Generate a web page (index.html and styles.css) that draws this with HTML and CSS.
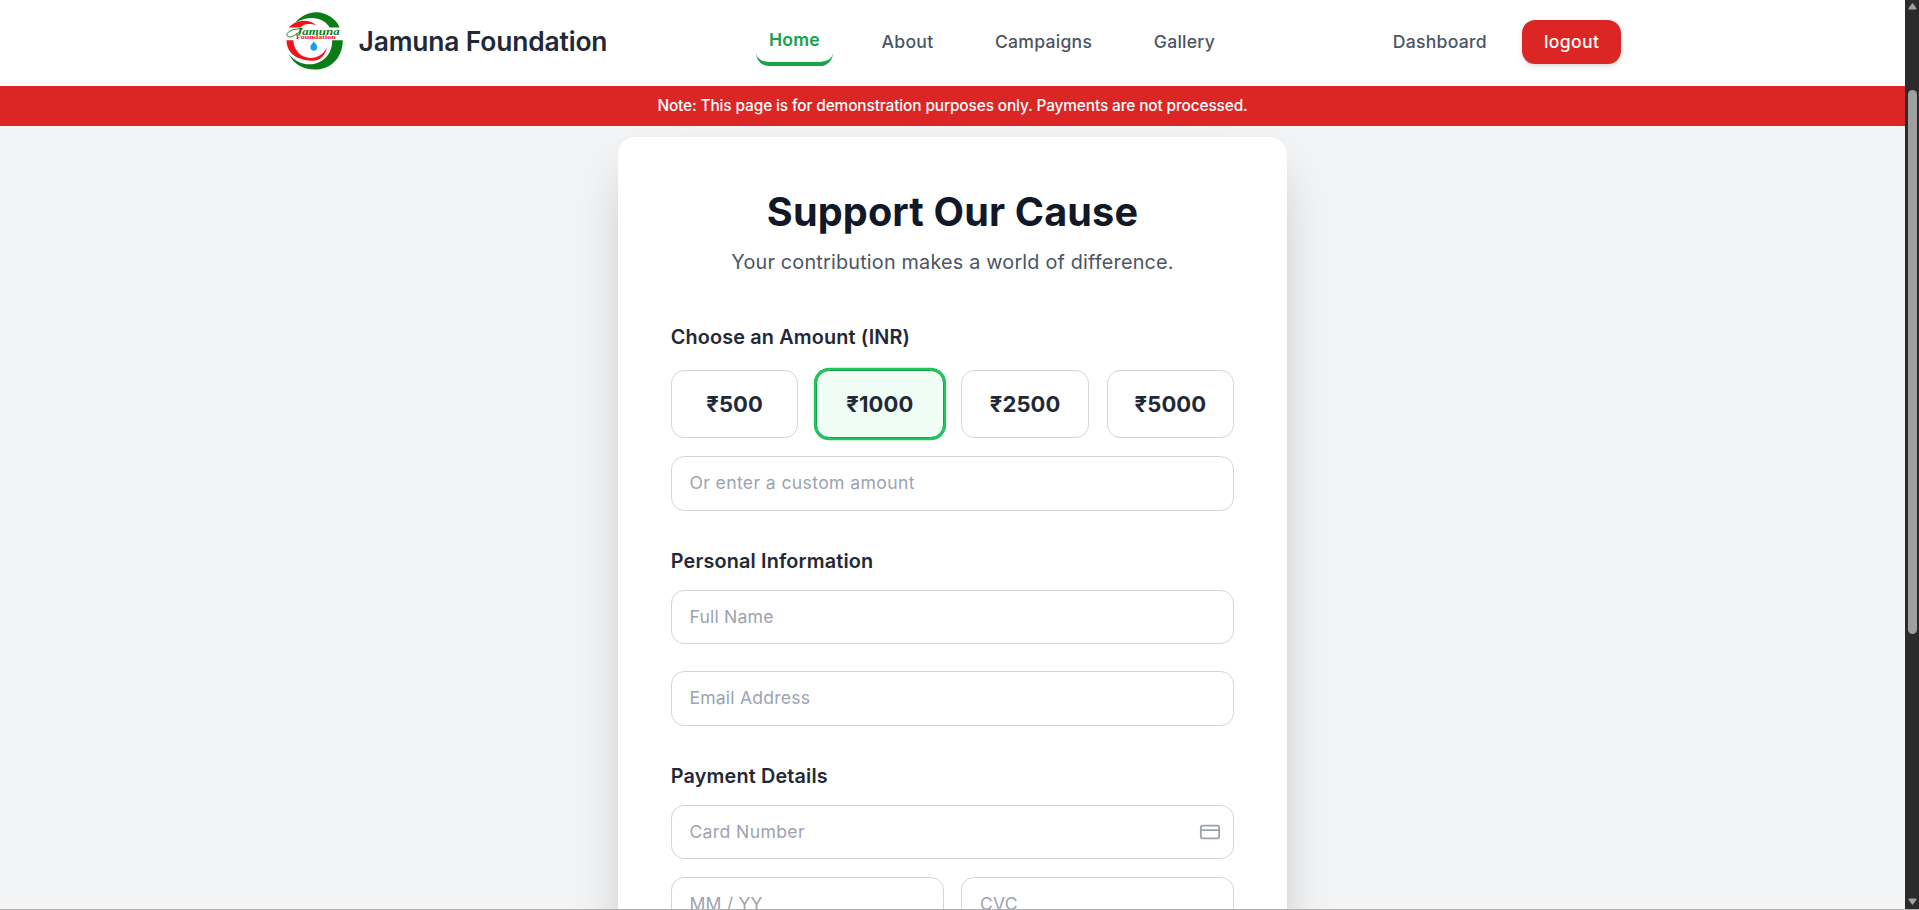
FILE: index.html
```html
<!DOCTYPE html>
<html lang="en">
<head>
<meta charset="utf-8">
<title>Jamuna Foundation</title>
<link rel="stylesheet" href="styles.css">
</head>
<body>
<div class="viewport">
  <div class="page">
    <header class="navbar">
      <div class="navbar-inner">
        <a class="brand">
          <svg class="logo" viewBox="0 0 62 62">
            <path d="M11 12C19 2 31-.8 40 2.500C49 5.500 54.500 12 56 16.500H46C41 8 27 2.500 11 12Z" fill="#0b7d16"/>
            <path d="M5 16.500C12 8.500 26 7.500 32.500 14.500C27 12.500 20 12.500 17 16.500Z" fill="#f2121c"/>
            <path d="M2.500 29.500H9.500C9.500 41 20 50 32 46.500C37 45 40.500 42 43 36.500C42 45 36 50.500 28 50C13 49.500 3 43 2.500 29.500Z" fill="#f2121c"/>
            <path d="M48.500 29.500H59.200C59 46.500 48 59 31 59C19 59 9.500 53 4.500 43C13 53 23 55 31 53C41 51 49 42 48.500 29.500Z" fill="#0b7d16"/>
            <path d="M30 30.500C32 33.500 33.400 34.500 33.400 36.500A3.400 3.400 0 0 1 26.600 36.500C26.600 34.500 28 33.500 30 30.500Z" fill="#199fe8"/>
            <path d="M16 18C6 18 1 23 3.500 25.500C7 28 14 23 19 17" fill="none" stroke="#0b7d16" stroke-width=".9"/>
            <text class="logo-name" x="12" y="24.500" textLength="44" lengthAdjust="spacingAndGlyphs">Jamuna</text>
            <text class="logo-sub" x="12" y="28.500" textLength="40" lengthAdjust="spacingAndGlyphs">Foundation</text>
          </svg>
          <span class="brand-name">Jamuna Foundation</span>
        </a>
        <nav class="links">
          <a class="link link-active">Home</a>
          <a class="link">About</a>
          <a class="link">Campaigns</a>
          <a class="link">Gallery</a>
        </nav>
        <div class="account">
          <a class="link">Dashboard</a>
          <button class="logout">logout</button>
        </div>
      </div>
    </header>
    <div class="notice">Note: This page is for demonstration purposes only. Payments are not processed.</div>
    <main class="main">
      <form class="card">
        <h1 class="title">Support Our Cause</h1>
        <p class="subtitle">Your contribution makes a world of difference.</p>
        <section class="section section-amount">
          <h2 class="label label-first">Choose an Amount (INR)</h2>
          <div class="amounts">
            <button type="button" class="amount">₹500</button>
            <button type="button" class="amount amount-selected">₹1000</button>
            <button type="button" class="amount">₹2500</button>
            <button type="button" class="amount">₹5000</button>
          </div>
          <input class="field field-wide field-raised" placeholder="Or enter a custom amount">
        </section>
        <section class="section">
          <h2 class="label">Personal Information</h2>
          <div class="stack">
            <input class="field" placeholder="Full Name">
            <input class="field field-raised" placeholder="Email Address">
          </div>
        </section>
        <section class="section">
          <h2 class="label">Payment Details</h2>
          <div class="card-number">
            <input class="field field-wide field-raised" placeholder="Card Number">
            <svg class="card-icon" viewBox="0 0 24 24" fill="none" stroke="currentColor" stroke-width="2" stroke-linecap="round" stroke-linejoin="round"><rect x="2" y="5" width="20" height="14" rx="2"/><path d="M2 10h20"/></svg>
          </div>
          <div class="pair">
            <input class="field field-raised" placeholder="MM / YY">
            <input class="field field-raised" placeholder="CVC">
          </div>
        </section>
      </form>
    </main>
  </div>
  <div class="scrollbar">
    <svg class="arrow" viewBox="0 0 10 8"><path d="M4.200.8Q5-.2 5.800.8L9.500 6Q9.800 7.500 8.800 7.500H1.200Q.2 7.500.5 6Z" fill="#9f9f9f"/></svg>
    <div class="thumb"></div>
    <svg class="arrow arrow-down" viewBox="0 0 10 8"><path d="M4.200.8Q5-.2 5.800.8L9.500 6Q9.800 7.500 8.800 7.500H1.200Q.2 7.500.5 6Z" fill="#9f9f9f"/></svg>
  </div>
</div>
</body>
</html>
```
FILE: styles.css
```css
* { box-sizing: border-box; margin: 0; }
html { font-size: 17.6px; }
body { font-family: Inter, "Liberation Sans", sans-serif; color: #1f2937; overflow: hidden; }
button, input { font-family: inherit; }

.viewport { display: flex; height: 910px; border-bottom: 1px solid #b5b0ae; }
.page { flex: 1; display: flex; flex-direction: column; overflow: hidden; background: #f3f4f6; }

.navbar { flex: none; height: 86px; background: #fff; }
.navbar-inner { display: flex; align-items: center; justify-content: space-between; width: 1337.6px; height: 84px; margin: 0 auto; }
.brand { display: flex; align-items: center; gap: .75rem; }
.logo { width: 61.6px; height: 61.6px; }
.logo-name { font: italic bold 11px "Liberation Serif", serif; fill: #0b7d16; }
.logo-sub { font: bold 6px "Liberation Serif", serif; fill: #f2121c; }
.brand-name { font-size: 1.5rem; line-height: 2rem; font-weight: 600; letter-spacing: -.15px; }
.links { display: flex; align-items: center; gap: 2rem; margin: 0 1.5px 0 -1.5px; }
.link { padding: .5rem .75rem; font-size: 1rem; line-height: 1.5rem; font-weight: 500; letter-spacing: .25px; color: #4b5563; }
.link-active { color: #16a34a; font-weight: 600; border-bottom: 4px solid #16a34a; border-radius: .75rem; }
.account { display: flex; align-items: center; gap: 1.25rem; }
.logout { padding: .5rem 1.25rem; border: 0; border-radius: .75rem; background: #dc2626; color: #fff; font-size: 1rem; line-height: 1.5rem; font-weight: 500; letter-spacing: .35px; box-shadow: 0 4px 7px -1px rgba(0,0,0,.1), 0 2px 4px -2px rgba(0,0,0,.1); }

.notice { flex: none; height: 40px; padding-top: .5rem; background: #dc2626; color: #fff; font-size: .875rem; line-height: 1.25rem; font-weight: 500; letter-spacing: -.115px; text-align: center; }

.main { flex: 1; min-height: 0; padding-top: 10.8px; overflow: hidden; }
.card { width: 669px; height: 1000px; margin: 0 auto; padding: 3rem; background: #fff; border-radius: 1rem; box-shadow: 0 27.5px 55px -13.2px rgba(0,0,0,.25); }
.title { font-size: 2.25rem; line-height: 2.5rem; font-weight: 700; letter-spacing: .14px; color: #111827; text-align: center; }
.subtitle { margin: .75rem 0 2.5rem; font-size: 1.125rem; line-height: 1.75rem; letter-spacing: .2px; color: #4b5563; text-align: center; }
.section { margin-bottom: 2rem; }
.section-amount { margin-bottom: 35px; }
.label { margin-bottom: .75rem; font-size: 1.125rem; line-height: 1.75rem; font-weight: 600; letter-spacing: .16px; }
.label-first { margin-bottom: 1rem; }

.amounts { display: grid; grid-template-columns: repeat(4, 1fr); gap: 1rem; margin-bottom: 17.8px; }
.amount { padding: 1rem 0; border: 1px solid #d1d5db; border-radius: .75rem; background: #fff; color: #1f2937; font-size: 1.25rem; line-height: 1.75rem; font-weight: 700; letter-spacing: .1px; }
.amount-selected { border-color: #16a34a; background: #f0fdf4; box-shadow: 0 0 0 2.2px #22c55e; }

.field { display: block; width: 100%; height: 54.8px; padding: 0 1rem; border: 1px solid #d1d5db; border-radius: .75rem; background: #fff; font-size: 1rem; line-height: 1.5rem; letter-spacing: .2px; outline: 0; }
.field::placeholder { color: #9ca3af; opacity: 1; }
.field-wide { letter-spacing: .37px; }
.field-raised { padding-bottom: 1px; }
.stack { display: grid; gap: 1.5rem; }
.card-number { position: relative; margin-bottom: 1rem; }
.card-icon { position: absolute; right: .75rem; top: 50%; width: 1.25rem; height: 1.25rem; margin-top: -.625rem; color: #9ca3af; }
.pair { display: grid; grid-template-columns: 1fr 1fr; gap: 1rem; }

.scrollbar { flex: none; display: flex; flex-direction: column; align-items: center; width: 14px; padding: 3px 0 4px; background: #2b2b2b; }
.arrow { width: 9px; height: 7px; }
.arrow-down { margin-top: auto; transform: rotate(180deg); }
.thumb { width: 9px; height: 544px; margin-top: 80px; border-radius: 5px; background: #9f9f9f; }
```
